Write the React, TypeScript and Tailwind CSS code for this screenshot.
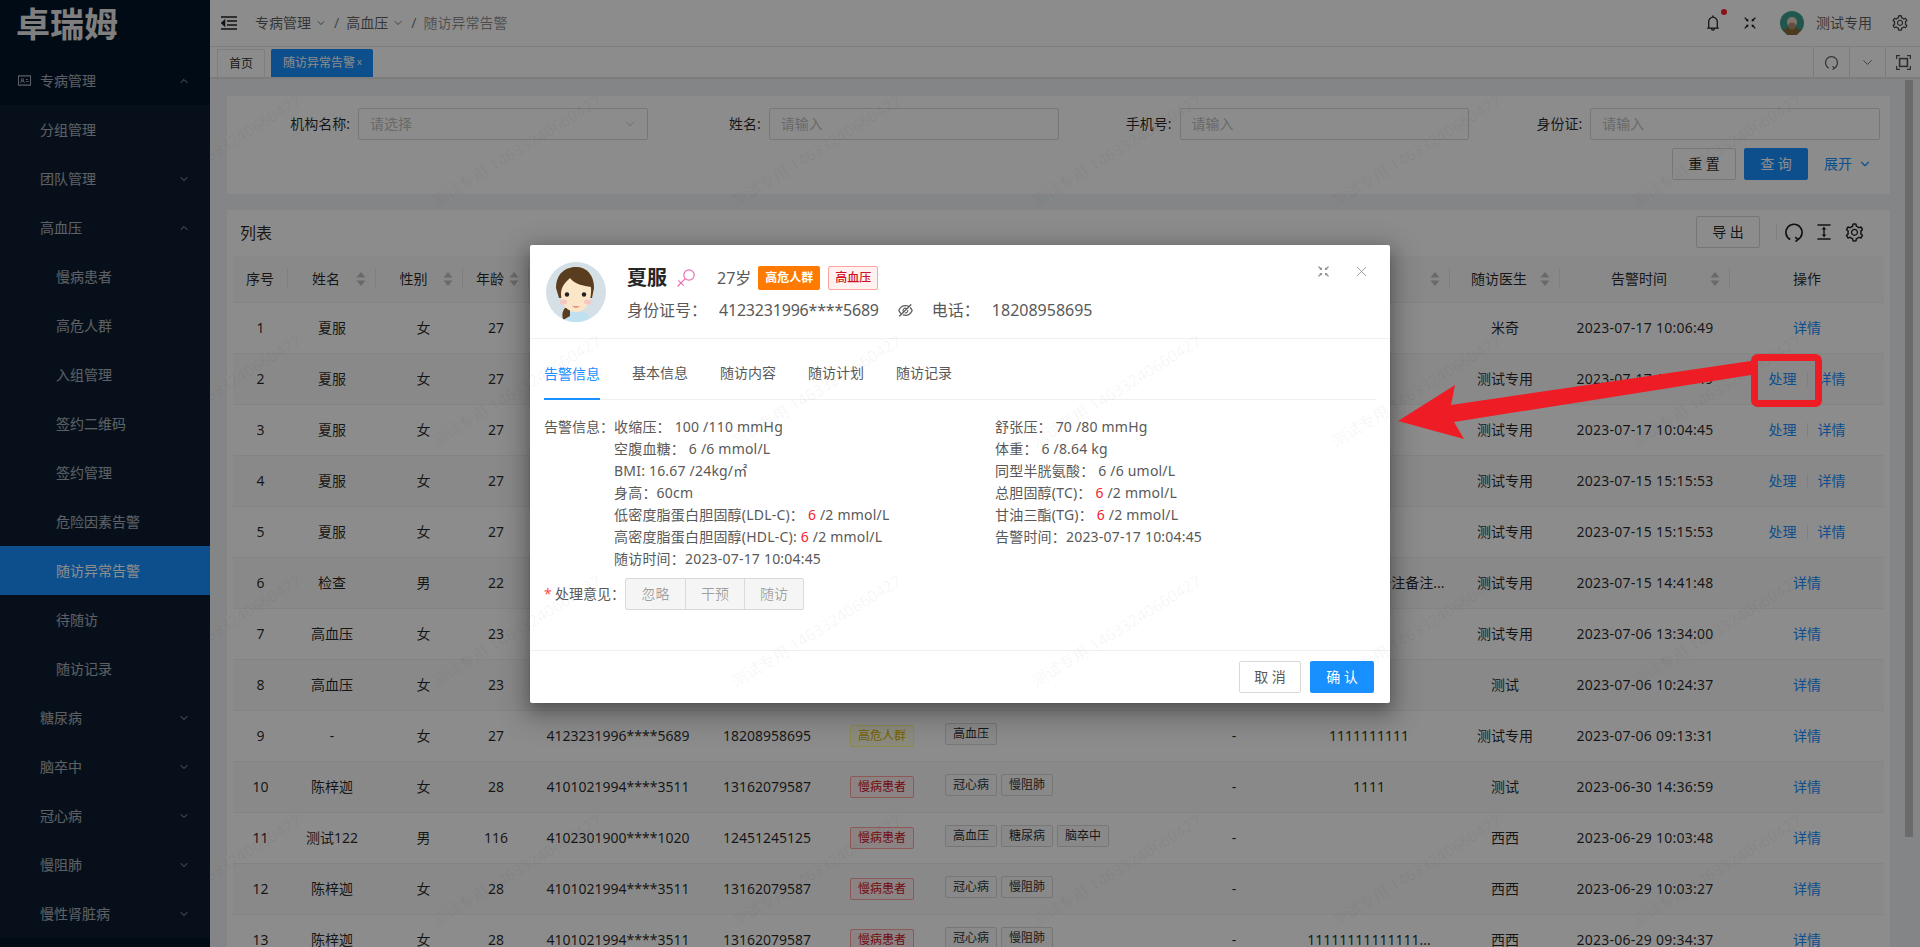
import React from "react";
import { ChevronDown, ChevronUp, X } from "lucide-react";
import {
  AiOutlineBell,
  AiOutlineFullscreenExit,
  AiOutlineSetting,
  AiOutlineIdcard,
  AiOutlineColumnHeight,
  AiOutlineEyeInvisible,
} from "react-icons/ai";

const Refresh = ({ size = 20, className = "" }: { size?: number; className?: string }) => (
  <svg width={size} height={size} viewBox="0 0 24 24" fill="none" stroke="currentColor" strokeWidth="2" className={className}>
    <path d="M7.5 21A9.7 9.7 0 1 1 16.5 21" />
    <path d="M13.5 18.2L16.7 21L13.8 23.6" />
  </svg>
);

const Collapse = () => (
  <svg width="16" height="14" viewBox="0 0 16 14" fill="none" stroke="#222" strokeWidth="1.4">
    <path d="M0 1H16M6 5H16M6 9H16M0 13H16" />
    <path d="M3.6 4.4L0.8 7L3.6 9.6Z" fill="#222" />
  </svg>
);

const FrameIcon = () => (
  <svg width="15" height="15" viewBox="0 0 15 15" fill="none" stroke="#555" strokeWidth="1.2">
    <path d="M0.6 4V0.6H4M11 0.6H14.4V4M14.4 11V14.4H11M4 14.4H0.6V11" />
    <rect x="3.6" y="3.6" width="7.8" height="7.8" strokeWidth="1.6" />
  </svg>
);

const Sorter = () => (
  <svg width="10" height="14" viewBox="0 0 10 14" fill="#bfbfbf" className="shrink-0">
    <path d="M5 0L9.5 5.6H0.5Z" />
    <path d="M5 14L0.5 8.4H9.5Z" />
  </svg>
);

const WomanAvatar = () => (
  <svg width="60" height="60" viewBox="0 0 60 60" className="shrink-0">
    <defs>
      <clipPath id="avatar-clip">
        <circle cx="30" cy="30" r="30" />
      </clipPath>
    </defs>
    <g clipPath="url(#avatar-clip)">
      <rect width="60" height="60" fill="#d5dfe6" />
      <path d="M18 52Q30 46 42 52L44 60H16Z" fill="#bfe0f0" />
      <path d="M19 46Q15 50 17 58L24 54L24 46Z" fill="#5a3d1e" />
      <path d="M10 26C10 11 20 5 30 5C41 5 48 13 48 26L46 36H13Z" fill="#5a3d1e" />
      <path d="M15 32C15 24 20 20 24 16C28 22 38 24 45 25C46 40 40 50 30 50C21 50 15 42 15 32Z" fill="#fbe6c8" />
      <circle cx="21" cy="32.500" r="2.200" fill="#222" />
      <circle cx="38" cy="32.500" r="2.200" fill="#222" />
      <ellipse cx="17.500" cy="40" rx="3.500" ry="2.500" fill="#f6c6c0" />
      <ellipse cx="41.500" cy="40" rx="3.500" ry="2.500" fill="#f6c6c0" />
      <path d="M26 44Q30 48 34 44Z" fill="#ef8f8f" />
    </g>
  </svg>
);

const HeadAvatar = () => (
  <svg width="24" height="24" viewBox="0 0 24 24">
    <circle cx="12" cy="12" r="12" fill="#3f9f8f" />
    <path d="M3 19Q12 13 21 19L17 24H7Z" fill="#8a6a3a" />
    <circle cx="12" cy="11" r="5" fill="#e8d6c6" />
    <circle cx="12" cy="15" r="3.400" fill="#b98f70" />
  </svg>
);

const Gender = () => (
  <svg width="20" height="20" viewBox="0 0 20 20" fill="none" stroke="#e86fb5" strokeWidth="1.200" className="shrink-0">
    <circle cx="13" cy="7" r="5.200" />
    <path d="M9.300 10.700L1.500 18.500M2.300 12.300L7.700 17.700" />
  </svg>
);

const menu: { t: string; level: number; chev?: "up" | "down"; active?: boolean }[] = [
  { t: "分组管理", level: 1 },
  { t: "团队管理", level: 1, chev: "down" },
  { t: "高血压", level: 1, chev: "up" },
  { t: "慢病患者", level: 2 },
  { t: "高危人群", level: 2 },
  { t: "入组管理", level: 2 },
  { t: "签约二维码", level: 2 },
  { t: "签约管理", level: 2 },
  { t: "危险因素告警", level: 2 },
  { t: "随访异常告警", level: 2, active: true },
  { t: "待随访", level: 2 },
  { t: "随访记录", level: 2 },
  { t: "糖尿病", level: 1, chev: "down" },
  { t: "脑卒中", level: 1, chev: "down" },
  { t: "冠心病", level: 1, chev: "down" },
  { t: "慢阻肺", level: 1, chev: "down" },
  { t: "慢性肾脏病", level: 1, chev: "down" },
];

type Row = {
  n: number; name: string; sex: string; age: number; id: string; phone: string;
  group: "high" | "chronic"; tags: string[]; remark: string; doctor: string; time: string; act?: boolean;
};

const A = { id: "4123231996****5689", phone: "18208958695" };
const B = { id: "4101021994****3511", phone: "13162079587" };

const rows: Row[] = [
  { n: 1, name: "夏服", sex: "女", age: 27, ...A, group: "high", tags: ["高血压"], remark: "", doctor: "米奇", time: "2023-07-17 10:06:49" },
  { n: 2, name: "夏服", sex: "女", age: 27, ...A, group: "high", tags: ["高血压"], remark: "", doctor: "测试专用", time: "2023-07-17 10:05:49", act: true },
  { n: 3, name: "夏服", sex: "女", age: 27, ...A, group: "high", tags: ["高血压"], remark: "", doctor: "测试专用", time: "2023-07-17 10:04:45", act: true },
  { n: 4, name: "夏服", sex: "女", age: 27, ...A, group: "high", tags: ["高血压"], remark: "", doctor: "测试专用", time: "2023-07-15 15:15:53", act: true },
  { n: 5, name: "夏服", sex: "女", age: 27, ...A, group: "high", tags: ["高血压"], remark: "", doctor: "测试专用", time: "2023-07-15 15:15:53", act: true },
  { n: 6, name: "检查", sex: "男", age: 22, ...A, group: "high", tags: ["高血压"], remark: "测试备注测试备注备注...", doctor: "测试专用", time: "2023-07-15 14:41:48" },
  { n: 7, name: "高血压", sex: "女", age: 23, ...A, group: "high", tags: ["高血压"], remark: "", doctor: "测试专用", time: "2023-07-06 13:34:00" },
  { n: 8, name: "高血压", sex: "女", age: 23, ...A, group: "high", tags: ["高血压"], remark: "", doctor: "测试", time: "2023-07-06 10:24:37" },
  { n: 9, name: "-", sex: "女", age: 27, ...A, group: "high", tags: ["高血压"], remark: "1111111111", doctor: "测试专用", time: "2023-07-06 09:13:31" },
  { n: 10, name: "陈梓迦", sex: "女", age: 28, ...B, group: "chronic", tags: ["冠心病", "慢阻肺"], remark: "1111", doctor: "测试", time: "2023-06-30 14:36:59" },
  { n: 11, name: "测试122", sex: "男", age: 116, id: "4102301900****1020", phone: "12451245125", group: "chronic", tags: ["高血压", "糖尿病", "脑卒中"], remark: "", doctor: "西西", time: "2023-06-29 10:03:48" },
  { n: 12, name: "陈梓迦", sex: "女", age: 28, ...B, group: "chronic", tags: ["冠心病", "慢阻肺"], remark: "", doctor: "西西", time: "2023-06-29 10:03:27" },
  { n: 13, name: "陈梓迦", sex: "女", age: 28, ...B, group: "chronic", tags: ["冠心病", "慢阻肺"], remark: "11111111111111...", doctor: "西西", time: "2023-06-29 09:34:37" },
];

const headers: { t: string; sort: boolean }[] = [
  { t: "序号", sort: false }, { t: "姓名", sort: true }, { t: "性别", sort: true }, { t: "年龄", sort: true },
  { t: "身份证号", sort: true }, { t: "手机号", sort: true }, { t: "人群", sort: true }, { t: "疾病", sort: false },
  { t: "告警", sort: true }, { t: "备注", sort: true }, { t: "随访医生", sort: true }, { t: "告警时间", sort: true }, { t: "操作", sort: false },
];

const Field = ({ label, placeholder, select }: { label: string; placeholder: string; select?: boolean }) => (
  <div className="flex items-center h-8">
    <div className="w-[121px] shrink-0 pr-[8px] text-right text-sm text-black/85">{label}:</div>
    <div className="flex-1 h-8 border border-[#d9d9d9] rounded-[2px] bg-white pl-[11px] pr-[10px] flex items-center justify-between text-sm text-[#bfbfbf]">
      <span>{placeholder}</span>
      {select && <ChevronDown size={14} strokeWidth={1.4} className="text-[#bfbfbf]" />}
    </div>
  </div>
);

const Link = ({ children }: { children: React.ReactNode }) => <span className="text-[#1890ff]">{children}</span>;

export default function App() {
  const cells = Array.from({ length: 28 });
  return (
    <div className="relative w-[1920px] h-[947px] overflow-hidden flex bg-[#f0f2f5] font-['Noto_Sans','Noto_Sans_CJK_SC',sans-serif] text-sm">
      {/* sidebar */}
      <aside className="w-[210px] shrink-0 bg-[#021428] flex flex-col">
        <div className="h-[56px] pl-4 flex items-start pt-[1px] text-[34px] leading-[46px] font-bold text-[#e8e8e8] tracking-normal">卓瑞姆</div>
        <div className="h-[49px] flex items-center pl-[17px] pr-[20px] text-white/65">
          <AiOutlineIdcard size={15} className="mr-[8px]" />
          <span className="flex-1">专病管理</span>
          <ChevronUp size={12} />
        </div>
        <div className="bg-[#0b1c30] flex flex-col">
          {menu.map((m) => (
            <div
              key={m.t}
              className={
                m.active
                  ? "h-[49px] flex items-center pl-[56px] pr-[20px] bg-[#1890ff] text-white"
                  : m.level === 2
                  ? "h-[49px] flex items-center pl-[56px] pr-[20px] text-white/65"
                  : "h-[49px] flex items-center pl-[40px] pr-[20px] text-white/65"
              }
            >
              <span className="flex-1">{m.t}</span>
              {m.chev === "up" && <ChevronUp size={12} />}
              {m.chev === "down" && <ChevronDown size={12} />}
            </div>
          ))}
        </div>
      </aside>

      {/* main */}
      <div className="flex-1 min-w-0 flex flex-col">
        <header className="h-[47px] shrink-0 bg-white border-b border-[#e8e8e8] flex items-center pl-[11px] pr-[11px]">
          <Collapse />
          <div className="ml-[18px] flex items-center text-black/65">
            <span>专病管理</span>
            <ChevronDown size={12} className="ml-[4px] text-black/55" />
            <span className="mx-[7px] text-black/55">/</span>
            <span>高血压</span>
            <ChevronDown size={12} className="ml-[4px] text-black/55" />
            <span className="mx-[7px] text-black/55">/</span>
            <span className="text-black/45">随访异常告警</span>
          </div>
          <div className="ml-auto flex items-center text-[#222]">
            <div className="relative">
              <AiOutlineBell size={18} />
              <span className="absolute -top-[5px] -right-[5px] w-[6px] h-[6px] rounded-full bg-[#f5222d]" />
            </div>
            <AiOutlineFullscreenExit size={16} className="ml-[20px]" />
            <div className="ml-[22px]"><HeadAvatar /></div>
            <span className="ml-[12px] text-black/65">测试专用</span>
            <AiOutlineSetting size={18} className="ml-[19px] text-[#444]" />
          </div>
        </header>

        <div className="h-[32px] shrink-0 bg-white border-b-2 border-[#e4e4e4] flex items-end pl-[7px]">
          <div className="h-[28px] w-[48px] border border-b-0 border-[#e8e8e8] flex items-center justify-center text-xs text-black/85">首页</div>
          <div className="ml-[6px] h-[28px] w-[102px] bg-[#1890ff] rounded-t-[2px] flex items-center pl-[12px] text-xs text-white">
            随访异常告警<span className="ml-[2px] text-[9px] leading-none -mt-[3px]">x</span>
          </div>
          <div className="ml-auto h-[30px] flex text-[#666]">
            <div className="w-[36px] border-l border-[#e0e0e0] flex items-center justify-center"><Refresh size={15} /></div>
            <div className="w-[36px] border-l border-[#e0e0e0] flex items-center justify-center"><ChevronDown size={15} strokeWidth={1.5} /></div>
            <div className="w-[35px] border-l border-[#e0e0e0] flex items-center justify-center"><FrameIcon /></div>
          </div>
        </div>

        <div className="flex-1 min-h-0 flex">
          <div className="flex-1 min-w-0 pl-[17px] pr-[15px] pt-[17px] overflow-hidden">
            {/* search */}
            <section className="h-[98px] bg-white px-[10px] pt-[12px]">
              <div className="grid grid-cols-4">
                <Field label="机构名称" placeholder="请选择" select />
                <Field label="姓名" placeholder="请输入" />
                <Field label="手机号" placeholder="请输入" />
                <Field label="身份证" placeholder="请输入" />
              </div>
              <div className="mt-2 flex items-center justify-end pr-[8px]">
                <button className="h-8 w-16 border border-[#d9d9d9] rounded-[2px] bg-white text-black/85">重 置</button>
                <button className="ml-2 h-8 w-16 rounded-[2px] bg-[#1890ff] text-white">查 询</button>
                <span className="ml-4 text-[#1890ff]">展开</span>
                <ChevronDown size={14} className="ml-[6px] text-[#1890ff]" />
              </div>
            </section>

            {/* list */}
            <section className="mt-4 bg-white px-[6px]">
              <div className="h-[46px] flex items-center">
                <span className="ml-[7px] text-base text-black/85">列表</span>
                <div className="ml-auto flex items-center pb-[2px] pr-[19px]">
                  <button className="h-8 w-16 border border-[#d9d9d9] rounded-[2px] bg-white text-black/85">导 出</button>
                  <span className="ml-4 h-4 w-px bg-[#e8e8e8]" />
                  <Refresh size={20} className="ml-[7px] text-[#222]" />
                  <AiOutlineColumnHeight size={20} className="ml-[10px] text-[#222]" />
                  <AiOutlineSetting size={21} className="ml-[10px] text-[#222]" />
                </div>
              </div>
              <table className="w-[1651px] table-fixed border-collapse text-black/85">
                <colgroup>
                  <col className="w-[55px]" /><col className="w-[88px]" /><col className="w-[87px]" /><col className="w-[66px]" />
                  <col className="w-[178px]" /><col className="w-[120px]" /><col className="w-[110px]" /><col className="w-[243px]" />
                  <col className="w-[108px]" /><col className="w-[162px]" /><col className="w-[110px]" /><col className="w-[170px]" /><col className="w-[154px]" />
                </colgroup>
                <thead>
                  <tr className="h-[46px] bg-[#fafafa] border-b border-[#f0f0f0]">
                    {headers.map((h, i) => (
                      <th key={h.t} className="p-0 font-normal">
                        <div className={i === headers.length - 1 ? "h-[21px] flex items-center px-2" : "h-[21px] flex items-center px-2 border-r border-[#e8e8e8]"}>
                          <span className="flex-1 text-center whitespace-nowrap">{h.t}</span>
                          {h.sort && <Sorter />}
                          {h.sort && <span className="w-[1px]" />}
                        </div>
                      </th>
                    ))}
                  </tr>
                </thead>
                <tbody>
                  {rows.map((r) => (
                    <tr key={r.n} className={r.n % 2 === 0 ? "h-[51px] bg-[#fafafa] border-b border-[#f0f0f0]" : "h-[51px] bg-white border-b border-[#f0f0f0]"}>
                      <td className="p-0 text-center">{r.n}</td>
                      <td className="p-0 text-center">{r.name}</td>
                      <td className="p-0 pl-2 text-center">{r.sex}</td>
                      <td className="p-0 text-center">{r.age}</td>
                      <td className="p-0 text-center">{r.id}</td>
                      <td className="p-0 text-center">{r.phone}</td>
                      <td className="p-0 text-center">
                        {r.group === "high" ? (
                          <span className="inline-flex h-[22px] items-center px-[7px] rounded-[2px] border border-[#fffb8f] bg-[#feffe6] text-xs text-[#d4b106]">高危人群</span>
                        ) : (
                          <span className="inline-flex h-[22px] items-center px-[7px] rounded-[2px] border border-[#ffa39e] bg-[#fff1f0] text-xs text-[#cf1322]">慢病患者</span>
                        )}
                      </td>
                      <td className="p-0 pl-2">
                        <div className="flex gap-[4px] pb-[4px]">
                          {r.tags.map((t) => (
                            <span key={t} className="inline-flex h-[22px] items-center px-[7px] rounded-[2px] border border-[#d9d9d9] bg-[#fafafa] text-xs text-black/85">{t}</span>
                          ))}
                        </div>
                      </td>
                      <td className="p-0 text-center">-</td>
                      <td className="p-0 text-center whitespace-nowrap">{r.remark}</td>
                      <td className="p-0 text-center">{r.doctor}</td>
                      <td className="p-0 text-center tracking-[0.25px]">{r.time}</td>
                      <td className="p-0 text-center">
                        {r.act ? (
                          <span className="inline-flex items-center">
                            <Link>处理</Link>
                            <span className="mx-[10px] h-[14px] w-px bg-[#e8e8e8]" />
                            <Link>详情</Link>
                          </span>
                        ) : (
                          <Link>详情</Link>
                        )}
                      </td>
                    </tr>
                  ))}
                </tbody>
              </table>
            </section>
          </div>
          {/* page scrollbar */}
          <div className="w-[15px] shrink-0 pt-px bg-[#f0f2f5]">
            <div className="w-[8px] h-[757px] bg-[#c4c4c4]" />
          </div>
        </div>
      </div>

      {/* modal mask */}
      <div className="absolute inset-0 bg-black/45" />

      {/* modal */}
      <div className="absolute left-[530px] top-[245px] w-[860px] h-[458px] bg-white rounded-[2px] shadow-[0_3px_6px_-4px_rgba(0,0,0,0.12),0_6px_16px_rgba(0,0,0,0.24),0_9px_28px_8px_rgba(0,0,0,0.2)] flex flex-col text-[#595959]">
        <div className="h-[94px] shrink-0 border-b border-[#f0f0f0] pl-4 pr-[20px] pt-[17px] flex items-start">
          <WomanAvatar />
          <div className="ml-[21px] flex-1">
            <div className="h-[32px] flex items-center">
              <span className="text-xl font-bold text-[#262626]">夏服</span>
              <span className="ml-[9px]"><Gender /></span>
              <span className="ml-[21px] text-base">27岁</span>
              <span className="ml-[7px] h-6 px-[7px] rounded-[2px] bg-[#ff7a00] text-white text-xs font-bold flex items-center">高危人群</span>
              <span className="ml-2 h-6 px-[6px] rounded-[2px] border border-[#ffa39e] bg-[#fff1f0] text-[#cf1322] text-xs font-medium flex items-center">高血压</span>
            </div>
            <div className="mt-[4px] h-[24px] flex items-center text-base">
              <span>身份证号：</span>
              <span className="ml-[12px] tracking-[-0.2px]">4123231996****5689</span>
              <AiOutlineEyeInvisible size={17} className="ml-[18px]" />
              <span className="ml-[18px]">电话：</span>
              <span className="ml-[12px]">18208958695</span>
            </div>
          </div>
          <div className="flex items-center mt-[1px] text-[#888]">
            <AiOutlineFullscreenExit size={15} />
            <X size={17} strokeWidth={1.1} className="ml-[22px]" />
          </div>
        </div>

        <div className="mx-[14px] h-[61px] shrink-0 border-b border-[#f0f0f0] flex items-end gap-8">
          <div className="h-[36px] w-14 border-b-2 border-[#1890ff] text-[#1890ff] -mb-px">告警信息</div>
          <div className="h-[36px] w-14">基本信息</div>
          <div className="h-[36px] w-14">随访内容</div>
          <div className="h-[36px] w-14">随访计划</div>
          <div className="h-[36px] w-14">随访记录</div>
        </div>

        <div className="flex-1 px-[14px] pt-4 leading-[22px]">
          <div className="flex">
            <div className="w-[70px] shrink-0">告警信息：</div>
            <div className="w-[381px] shrink-0 tracking-[0.2px]">
              <div>收缩压： 100 /110 mmHg</div>
              <div>空腹血糖： 6 /6 mmol/L</div>
              <div>BMI: 16.67 /24kg/㎡</div>
              <div>身高：60cm</div>
              <div>低密度脂蛋白胆固醇(LDL-C)： <span className="text-[#f5222d]">6</span> /2 mmol/L</div>
              <div>高密度脂蛋白胆固醇(HDL-C): <span className="text-[#f5222d]">6</span> /2 mmol/L</div>
              <div>随访时间：2023-07-17 10:04:45</div>
            </div>
            <div className="tracking-[0.2px]">
              <div>舒张压： 70 /80 mmHg</div>
              <div>体重： 6 /8.64 kg</div>
              <div>同型半胱氨酸： 6 /6 umol/L</div>
              <div>总胆固醇(TC)： <span className="text-[#f5222d]">6</span> /2 mmol/L</div>
              <div>甘油三酯(TG)： <span className="text-[#f5222d]">6</span> /2 mmol/L</div>
              <div>告警时间：2023-07-17 10:04:45</div>
            </div>
          </div>
          <div className="mt-2 flex items-center">
            <span className="text-[#ff4d4f] w-[11px]">*</span>
            <span className="w-[70px]">处理意见：</span>
            <div className="flex h-8 text-black/35 bg-[#f5f5f5] border border-[#d9d9d9] rounded-[2px]">
              <span className="w-[59px] flex items-center justify-center">忽略</span>
              <span className="w-[59px] flex items-center justify-center border-l border-[#d9d9d9]">干预</span>
              <span className="w-[59px] flex items-center justify-center border-l border-[#d9d9d9]">随访</span>
            </div>
          </div>
        </div>

        <div className="h-[53px] shrink-0 border-t border-[#f0f0f0] flex items-center justify-end gap-[9px] pr-4">
          <button className="h-8 w-[62px] border border-[#d9d9d9] rounded-[2px] bg-white text-[#595959]">取 消</button>
          <button className="h-8 w-16 rounded-[2px] bg-[#1890ff] text-white">确 认</button>
        </div>
      </div>

      {/* watermark */}
      <div className="absolute inset-y-0 left-[210px] right-0 overflow-hidden pointer-events-none">
        <div className="-ml-[210px] w-[2100px] grid grid-cols-7 auto-rows-[240px]">
          {cells.map((_, i) => (
            <div key={i} className="relative h-[240px] overflow-hidden">
              <span className="absolute left-[133px] top-[192px] origin-left -rotate-[32deg] whitespace-nowrap text-base leading-[22px] text-black/[0.05]">
                测试专用 146332406604274
              </span>
            </div>
          ))}
        </div>
      </div>

      {/* annotation */}
      <svg width="1920" height="947" viewBox="0 0 1920 947" className="absolute inset-0 pointer-events-none">
        <polygon points="1398,421 1455,385 1451,405 1751,361 1751,375 1454,422 1464,439" fill="#ee1c25" />
        <rect x="1754.500" y="357.500" width="64" height="46" rx="3" fill="none" stroke="#ee1c25" strokeWidth="7" />
      </svg>
    </div>
  );
}
